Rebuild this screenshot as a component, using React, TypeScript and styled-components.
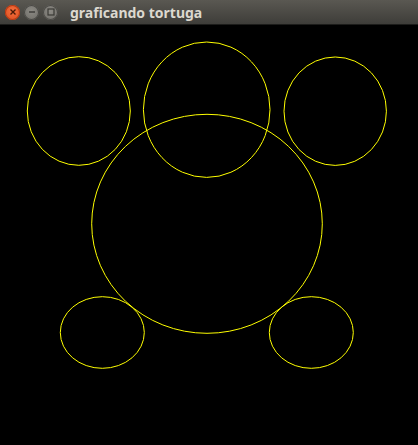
import React from "react";
import styled, { createGlobalStyle } from "styled-components";

const Global = createGlobalStyle`
  html, body { margin: 0; padding: 0; background: #000; }
  body { width: 418px; height: 445px; overflow: hidden; }
`;

const Window = styled.div`
  width: 418px;
  height: 445px;
  display: flex;
  flex-direction: column;
  background: #000;
`;

const TitleBar = styled.div`
  height: 24px;
  flex: 0 0 24px;
  display: flex;
  align-items: center;
  padding-left: 5px;
  background: linear-gradient(#5a5852, #3e3d39);
  border-bottom: 1px solid #1c1c1a;
`;

const Buttons = styled.div`
  display: flex;
  align-items: center;
  gap: 4px;
`;

const WinButton = styled.div<{ $close?: boolean }>`
  width: 15px;
  height: 15px;
  border-radius: 50%;
  display: flex;
  align-items: center;
  justify-content: center;
  background: ${(p) =>
    p.$close
      ? "radial-gradient(circle at 50% 40%, #f4703e, #d9491c)"
      : "radial-gradient(circle at 50% 40%, #8c8a84, #6d6b66)"};
  box-shadow: inset 0 0 0 1px ${(p) => (p.$close ? "#b33a14" : "#4a4945")};
`;

const Title = styled.div`
  margin-left: 12px;
  font-family: "Noto Sans", "DejaVu Sans", sans-serif;
  font-weight: 700;
  font-size: 14px;
  color: #dcd8cf;
`;

const Canvas = styled.div`
  flex: 1;
  background: #000;
`;

const shapes = [
  { cx: 78.8, cy: 111, rx: 51.5, ry: 54.3 },
  { cx: 206.7, cy: 109.7, rx: 63.3, ry: 67.7 },
  { cx: 335.2, cy: 111.2, rx: 51.2, ry: 54.2 },
  { cx: 207, cy: 223.8, rx: 115.3, ry: 109.5 },
  { cx: 102.3, cy: 332.5, rx: 42, ry: 35.8 },
  { cx: 311.3, cy: 332.5, rx: 42, ry: 35.8 },
];

export default function App() {
  return (
    <>
      <Global />
      <Window>
        <TitleBar>
          <Buttons>
            <WinButton $close>
              <svg width="8" height="8" viewBox="0 0 8 8">
                <path d="M1.5 1.5 L6.5 6.5 M6.5 1.5 L1.5 6.5" stroke="#4a1a08" strokeWidth="1.4" />
              </svg>
            </WinButton>
            <WinButton>
              <svg width="8" height="8" viewBox="0 0 8 8">
                <path d="M1 4 L7 4" stroke="#3a3935" strokeWidth="1.4" />
              </svg>
            </WinButton>
            <WinButton>
              <svg width="8" height="8" viewBox="0 0 8 8">
                <rect x="1" y="1" width="6" height="6" fill="none" stroke="#3a3935" strokeWidth="1.2" />
              </svg>
            </WinButton>
          </Buttons>
          <Title>graficando tortuga</Title>
        </TitleBar>
        <Canvas>
          <svg width="418" height="420" viewBox="0 25 418 420" style={{ display: "block" }}>
            {shapes.map((s, i) => (
              <ellipse key={i} cx={s.cx} cy={s.cy} rx={s.rx} ry={s.ry} fill="none" stroke="#ffff00" strokeWidth="1" />
            ))}
          </svg>
        </Canvas>
      </Window>
    </>
  );
}
